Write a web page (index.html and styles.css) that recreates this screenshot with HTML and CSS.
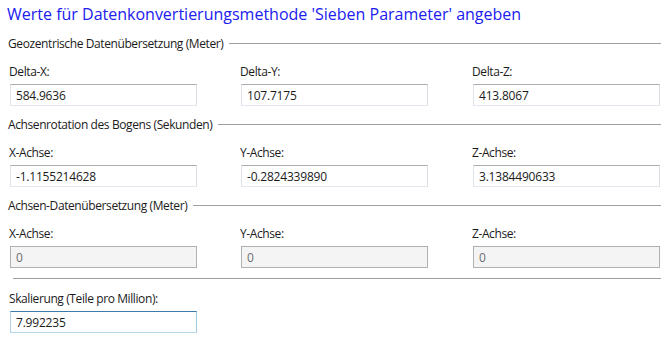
FILE: index.html
```html
<!DOCTYPE html>
<html lang="de">
<head>
  <meta charset="utf-8">
  <title>Sieben Parameter</title>
<link rel="stylesheet" href="styles.css">
</head>
<body>
<div class="page">
  <h1>Werte für Datenkonvertierungsmethode 'Sieben Parameter' angeben</h1>

  <div class="sectionHead"><span>Geozentrische Datenübersetzung (Meter)</span><div class="rule"></div></div>
  <div class="fields">
    <div class="field">
      <label>Delta-X:</label>
      <input type="text" value="584.9636">
    </div>
    <div class="field">
      <label>Delta-Y:</label>
      <input type="text" value="107.7175">
    </div>
    <div class="field">
      <label>Delta-Z:</label>
      <input type="text" value="413.8067">
    </div>
  </div>

  <div class="sectionHead"><span>Achsenrotation des Bogens (Sekunden)</span><div class="rule"></div></div>
  <div class="fields">
    <div class="field">
      <label>X-Achse:</label>
      <input type="text" value="-1.1155214628">
    </div>
    <div class="field">
      <label>Y-Achse:</label>
      <input type="text" value="-0.2824339890">
    </div>
    <div class="field">
      <label>Z-Achse:</label>
      <input type="text" value="3.1384490633">
    </div>
  </div>

  <div class="sectionHead"><span>Achsen-Datenübersetzung (Meter)</span><div class="rule"></div></div>
  <div class="fields">
    <div class="field">
      <label>X-Achse:</label>
      <input type="text" value="0" disabled>
    </div>
    <div class="field">
      <label>Y-Achse:</label>
      <input type="text" value="0" disabled>
    </div>
    <div class="field">
      <label>Z-Achse:</label>
      <input type="text" value="0" disabled>
    </div>
  </div>

  <div class="separator"></div>

  <div class="fields single">
    <div class="field">
      <label>Skalierung (Teile pro Million):</label>
      <input type="text" class="focused" value="7.992235">
    </div>
  </div>
</div>
</body>
</html>
```

FILE: styles.css
```css
body {
  margin: 0;
  background: white;
  font-family: "Open Sans", "Noto Sans", sans-serif;
  font-size: 12px;
  color: #1b1b1b;
}

.page {
  width: 653px;
  padding: 4px 7px 0 8px;
}

h1 {
  font-size: 16px;
  font-weight: normal;
  line-height: 20px;
  margin: 0 0 0 -1px;
  color: #2020f0;
}

.sectionHead {
  display: flex;
  align-items: center;
  height: 16px;
  line-height: 16px;
  margin-top: 12px;
  gap: 6px;
  letter-spacing: -0.4px;
}

.fields + .sectionHead {
  margin-top: 11px;
}

.sectionHead .rule {
  flex: 1;
  border-top: 1px solid #a0a0a0;
  margin-top: -2px;
}

.fields {
  display: grid;
  grid-template-columns: 231px 232px 187px;
  padding-left: 2px;
}

.field label {
  display: block;
  height: 16px;
  line-height: 16px;
  margin: 12px 0 0 -1px;
  letter-spacing: -0.4px;
}

.field input {
  display: block;
  box-sizing: border-box;
  width: 187px;
  height: 22px;
  margin: 4px 0 0 0;
  padding: 0 0 0 5px;
  font-family: inherit;
  font-size: 12px;
  letter-spacing: -0.2px;
  color: #1b1b1b;
  background: white;
  border: 1px solid;
  border-color: #abadb3 #dbdfe6 #e3e9ef #e2e3ea;
  border-radius: 0;
  outline: none;
}

.field input:disabled {
  background: #f4f4f4;
  border-color: #adb2b5;
  color: #6d6d6d;
}

.field input.focused {
  border-color: #3d7bad #a4c9e3 #b7d9ed #b5cfe7;
}

.separator {
  margin: 10px 0 0 5px;
  border-top: 1px solid #a0a0a0;
}
```
